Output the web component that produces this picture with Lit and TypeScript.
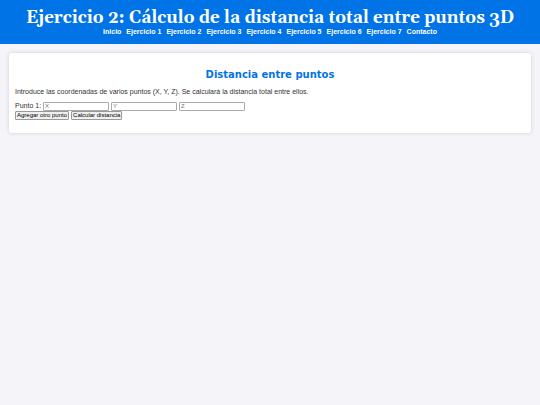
import { LitElement, html, css } from "lit";
import { customElement, state } from "lit/decorators.js";

@customElement("app-root")
export class AppRoot extends LitElement {
  static styles = css`
    :host {
      display: block;
      min-height: 100vh;
      background: #f4f4f9;
      color: #333;
      font: 7px/10px "Liberation Sans", Arial, sans-serif;
    }
    header {
      background: #0073e6;
      color: #fff;
      text-align: center;
      padding: 10px 0 8px;
    }
    h1 {
      margin: 0;
      font: bold 17px/17px Georgia, Gelasio, "Liberation Serif", serif;
    }
    nav ul {
      display: flex;
      flex-wrap: wrap;
      justify-content: center;
      gap: 5px;
      margin: 0;
      padding: 0;
      list-style: none;
      line-height: 9px;
    }
    nav a {
      color: #fff;
      font-weight: bold;
      text-decoration: none;
    }
    .card {
      margin: 9px;
      padding: 15px 6px 13px;
      border-radius: 3px;
      background: #fff;
      box-shadow: 0 0 4px rgba(0, 0, 0, 0.15);
    }
    h2 {
      margin: 0 0 6px;
      color: #0073e6;
      text-align: center;
      font: bold 10px/13px "DejaVu Sans", Verdana, sans-serif;
    }
    p {
      margin: 0 0 4px;
    }
    .row {
      display: flex;
      align-items: center;
      gap: 2px;
    }
    input {
      box-sizing: border-box;
      width: 66px;
      height: 9px;
      padding: 0 1px;
      border: 1px solid #aaa;
      border-radius: 1px;
      background: #fff;
      font: 6px/7px "Liberation Sans", Arial, sans-serif;
    }
    input::placeholder {
      color: #757575;
    }
    button {
      box-sizing: border-box;
      height: 9px;
      padding: 0 1px;
      border: 1px solid #999;
      border-radius: 1px;
      background: #efefef;
      color: #000;
      font: 6px/7px "Liberation Sans", Arial, sans-serif;
    }
  `;

  @state() private points = 1;

  private links = [
    "Inicio",
    ...Array.from({ length: 7 }, (_, i) => `Ejercicio ${i + 1}`),
    "Contacto",
  ];

  private addPoint() {
    this.points += 1;
  }

  render() {
    return html`
      <header>
        <h1>Ejercicio 2: Cálculo de la distancia total entre puntos 3D</h1>
        <nav>
          <ul>
            ${this.links.map((name) => html`<li><a href="#">${name}</a></li>`)}
          </ul>
        </nav>
      </header>
      <main>
        <section class="card">
          <h2>Distancia entre puntos</h2>
          <p>
            Introduce las coordenadas de varios puntos (X, Y, Z). Se calculará
            la distancia total entre ellos.
          </p>
          ${Array.from({ length: this.points }, (_, i) => i + 1).map(
            (n) => html`
              <div class="row">
                <label for="x${n}">Punto ${n}:</label>
                ${["X", "Y", "Z"].map(
                  (axis) => html`<input
                    id="${axis.toLowerCase()}${n}"
                    type="text"
                    placeholder=${axis}
                    aria-label="Punto ${n}, ${axis}"
                  />`,
                )}
              </div>
            `,
          )}
          <div class="row">
            <button type="button" @click=${this.addPoint}>
              Agregar otro punto
            </button>
            <button type="button">Calcular distancia</button>
          </div>
        </section>
      </main>
    `;
  }
}
